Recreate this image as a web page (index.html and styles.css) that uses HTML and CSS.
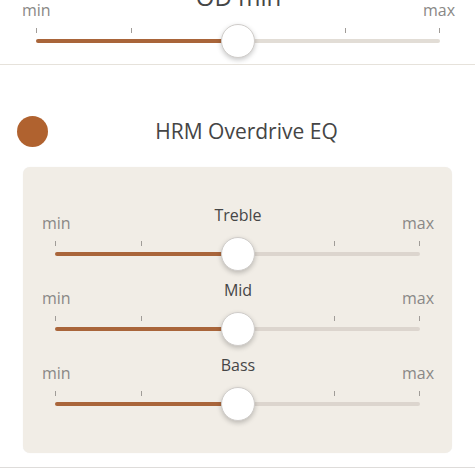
FILE: index.html
```html
<!DOCTYPE html>
<html>
<head>
<meta charset="utf-8">
<link rel="stylesheet" href="styles.css">
</head>
<body>
<section class="top-section">
  <div class="slider">
    <div class="slider-head">
      <span class="end end-min">min</span>
      <span class="slider-label big">OD min</span>
      <span class="end end-max">max</span>
    </div>
    <div class="slider-body body-top">
      <div class="ticks"><i></i><i></i><i></i></div>
      <div class="track-wrap">
        <div class="track"></div>
        <div class="thumb"></div>
      </div>
    </div>
  </div>
</section>

<section class="eq-section">
  <div class="eq-header">
    <span class="dot"></span>
    <h2 class="eq-title">HRM Overdrive EQ</h2>
  </div>
  <div class="panel">
    <div class="slider">
      <div class="slider-head">
        <span class="end end-min">min</span>
        <span class="slider-label">Treble</span>
        <span class="end end-max">max</span>
      </div>
      <div class="slider-body body-panel">
        <div class="ticks"><i></i><i></i><i></i></div>
        <div class="track-wrap">
          <div class="track"></div>
          <div class="thumb"></div>
        </div>
      </div>
    </div>
    <div class="slider">
      <div class="slider-head">
        <span class="end end-min">min</span>
        <span class="slider-label">Mid</span>
        <span class="end end-max">max</span>
      </div>
      <div class="slider-body body-panel">
        <div class="ticks"><i></i><i></i><i></i></div>
        <div class="track-wrap">
          <div class="track"></div>
          <div class="thumb"></div>
        </div>
      </div>
    </div>
    <div class="slider">
      <div class="slider-head">
        <span class="end end-min">min</span>
        <span class="slider-label">Bass</span>
        <span class="end end-max">max</span>
      </div>
      <div class="slider-body body-panel">
        <div class="ticks"><i></i><i></i><i></i></div>
        <div class="track-wrap">
          <div class="track"></div>
          <div class="thumb"></div>
        </div>
      </div>
    </div>
  </div>
</section>
</body>
</html>
```

FILE: styles.css
```css
* { box-sizing: border-box; }

html, body {
  margin: 0;
  padding: 0;
  background: #ffffff;
  font-family: "Open Sans", "Noto Sans", sans-serif;
  color: #444444;
  overflow: hidden;
}

.top-section {
  margin-top: -8px;
  padding: 0 20px 0 22px;
  border-bottom: 1px solid #e6e2db;
  height: 73px;
}

.slider-head {
  display: grid;
  grid-template-columns: 1fr auto 1fr;
  align-items: start;
  height: 28px;
}

.slider-label {
  font-size: 16px;
  line-height: 20px;
  color: #464646;
  text-align: center;
}

.slider-label.big {
  font-size: 24px;
  line-height: 20px;
  margin-top: -5px;
}

.end {
  font-size: 16px;
  line-height: 20px;
  color: #8a8886;
  margin-top: 8px;
  font-weight: 400;
}

.end-min { text-align: left; }
.end-max { text-align: right; }

.slider-body {
  height: 47px;
  padding-top: 8px;
}

.body-top { padding-left: 14px; padding-right: 15px; height: 44px; }
.body-panel { padding-left: 13px; padding-right: 14px; }

.ticks {
  display: grid;
  grid-template-columns: 23.5fr 53fr 23.5fr;
  height: 5px;
}

.ticks i {
  border-left: 1px solid #a09c98;
}

.ticks i:last-child {
  border-right: 1px solid #a09c98;
}

.track-wrap {
  position: relative;
  margin-top: 6px;
}

.track {
  height: 4px;
  border-radius: 2px;
  background: linear-gradient(to right, #a9653a 0, #a9653a 50%, #e2ddd6 50%, #e2ddd6 100%);
}

.body-panel .track {
  background: linear-gradient(to right, #a9653a 0, #a9653a 50%, #dcd5ce 50%, #dcd5ce 100%);
}

.thumb {
  position: absolute;
  left: 50%;
  top: 2px;
  width: 34px;
  height: 34px;
  margin-left: -17px;
  margin-top: -17px;
  border-radius: 50%;
  background: #ffffff;
  border: 1px solid #d0cdca;
  box-shadow: 0 2px 5px rgba(0, 0, 0, 0.22);
}

.eq-section {
  border-bottom: 1px solid #dedcda;
  padding-bottom: 14px;
}

.eq-header {
  display: flex;
  align-items: center;
  height: 40px;
  margin-top: 46px;
  padding-left: 17px;
  padding-right: 30px;
}

.dot {
  width: 31px;
  height: 31px;
  border-radius: 50%;
  background: #b0622f;
  flex: none;
}

.eq-title {
  flex: 1;
  margin: 0;
  text-align: center;
  font-size: 21px;
  font-weight: 400;
  color: #454545;
  line-height: 28px;
}

.panel {
  margin: 16px 23px 0 23px;
  width: 429px;
  height: 286px;
  background: #f1ede6;
  border-radius: 7px;
  padding: 38px 18px 0 19px;
  box-shadow: 0 0 1px rgba(0, 0, 0, 0.08);
}
```
